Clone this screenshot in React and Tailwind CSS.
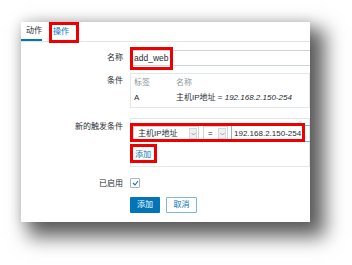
import React from "react";

function Chevron() {
  return (
    <div className="w-[8px] h-[11px] bg-[#eef0f1] border border-[#d3d9dc] flex items-center justify-center">
      <svg width="5" height="4" viewBox="0 0 5 4">
        <path d="M0.5 1 L2.5 3 L4.5 1" fill="none" stroke="#8a959b" strokeWidth="0.9" />
      </svg>
    </div>
  );
}

export default function App() {
  return (
    <div className="relative w-[352px] h-[265px] bg-white overflow-hidden pl-[21px] pt-[22px] font-['Liberation_Sans','Noto_Sans_CJK_SC',sans-serif] text-[8px] leading-none text-[#1f2c33]">
      <div className="w-[289px] h-[200px] bg-white overflow-hidden shadow-[11px_11px_18px_4px_rgba(0,0,0,0.62),0_0_12px_rgba(0,0,0,0.14)]">
        {/* Tabs */}
        <div className="flex h-[20px] border-b border-[#dfe4e7]">
          <div className="w-[21px] pl-[5px] flex items-center border-b-2 border-[#0275b8] text-[#1f2c33]">动作</div>
          <div className="ml-[11px] flex items-center text-[#0275b8]">操作</div>
        </div>

        {/* Form */}
        <div className="grid grid-cols-[102px_1fr] gap-x-[7px] mt-[8px] text-[#1f2c33]">
          {/* Name */}
          <div className="flex items-center justify-end h-[16px]">名称</div>
          <div className="h-[16px] border border-[#cdd5da] -mr-[4px] flex items-center pl-[3px] text-[8.5px]">add_web</div>

          {/* Conditions */}
          <div className="flex justify-end mt-[7px] pt-[4px]">条件</div>
          <div className="mt-[7px] h-[35px] border border-[#e3e7e9] pl-[3px] pt-[5px]">
            <div className="flex text-[#8d979c]">
              <span className="w-[42px]">标签</span>
              <span>名称</span>
            </div>
            <div className="flex mt-[7px]">
              <span className="w-[42px]">A</span>
              <span className="whitespace-nowrap">主机IP地址 = <i>192.168.2.150-254</i></span>
            </div>
          </div>

          {/* New trigger condition */}
          <div className="flex justify-end mt-[10px] pt-[5px]">新的触发条件</div>
          <div className="mt-[10px] h-[49px] border border-[#e3e7e9] pt-[6px] pl-[2px]">
            <div className="flex items-center h-[17px] whitespace-nowrap">
              <div className="w-[66px] h-[15px] border border-[#cdd5da] flex items-center justify-between pl-[4px] pr-[1px]">
                <span>主机IP地址</span>
                <Chevron />
              </div>
              <div className="ml-[4px] w-[25px] h-[15px] border border-[#cdd5da] flex items-center justify-between pl-[4px] pr-[1px]">
                <span>=</span>
                <Chevron />
              </div>
              <div className="ml-[3px] flex-1 h-[17px] border border-[#7fb7d9] flex items-center pl-[2px] -mr-[4px]">192.168.2.150-254</div>
            </div>
            <div className="mt-[9px] pl-[2px] text-[#0275b8]">添加</div>
          </div>

          {/* Enabled */}
          <div className="flex items-center justify-end mt-[11px] h-[11px]">已启用</div>
          <div className="mt-[11px] h-[11px]">
            <div className="w-[10px] h-[10px] border border-[#aab5bb] rounded-[1px] flex items-center justify-center">
              <svg width="7" height="6" viewBox="0 0 7 6">
                <path d="M1 3 L3 5 L6 1" fill="none" stroke="#0275b8" strokeWidth="1.1" />
              </svg>
            </div>
          </div>

          {/* Buttons */}
          <div></div>
          <div className="flex mt-[8px] gap-[6px]">
            <div className="w-[30px] h-[16px] bg-[#0275b8] text-white flex items-center justify-center rounded-[1px]">添加</div>
            <div className="w-[31px] h-[16px] border border-[#7fb7d9] text-[#0275b8] flex items-center justify-center rounded-[1px]">取消</div>
          </div>
        </div>
      </div>

      {/* Red annotation boxes */}
      <div className="absolute left-[49px] top-[22px] w-[30px] h-[21px] border-[3px] border-[#ee0000]"></div>
      <div className="absolute left-[130px] top-[47px] w-[43px] h-[23px] border-[3px] border-[#ee0000]"></div>
      <div className="absolute left-[130px] top-[123px] w-[175px] h-[19px] border-[3px] border-[#ee0000]"></div>
      <div className="absolute left-[130px] top-[144px] w-[27px] h-[19px] border-[3px] border-[#ee0000]"></div>
    </div>
  );
}
